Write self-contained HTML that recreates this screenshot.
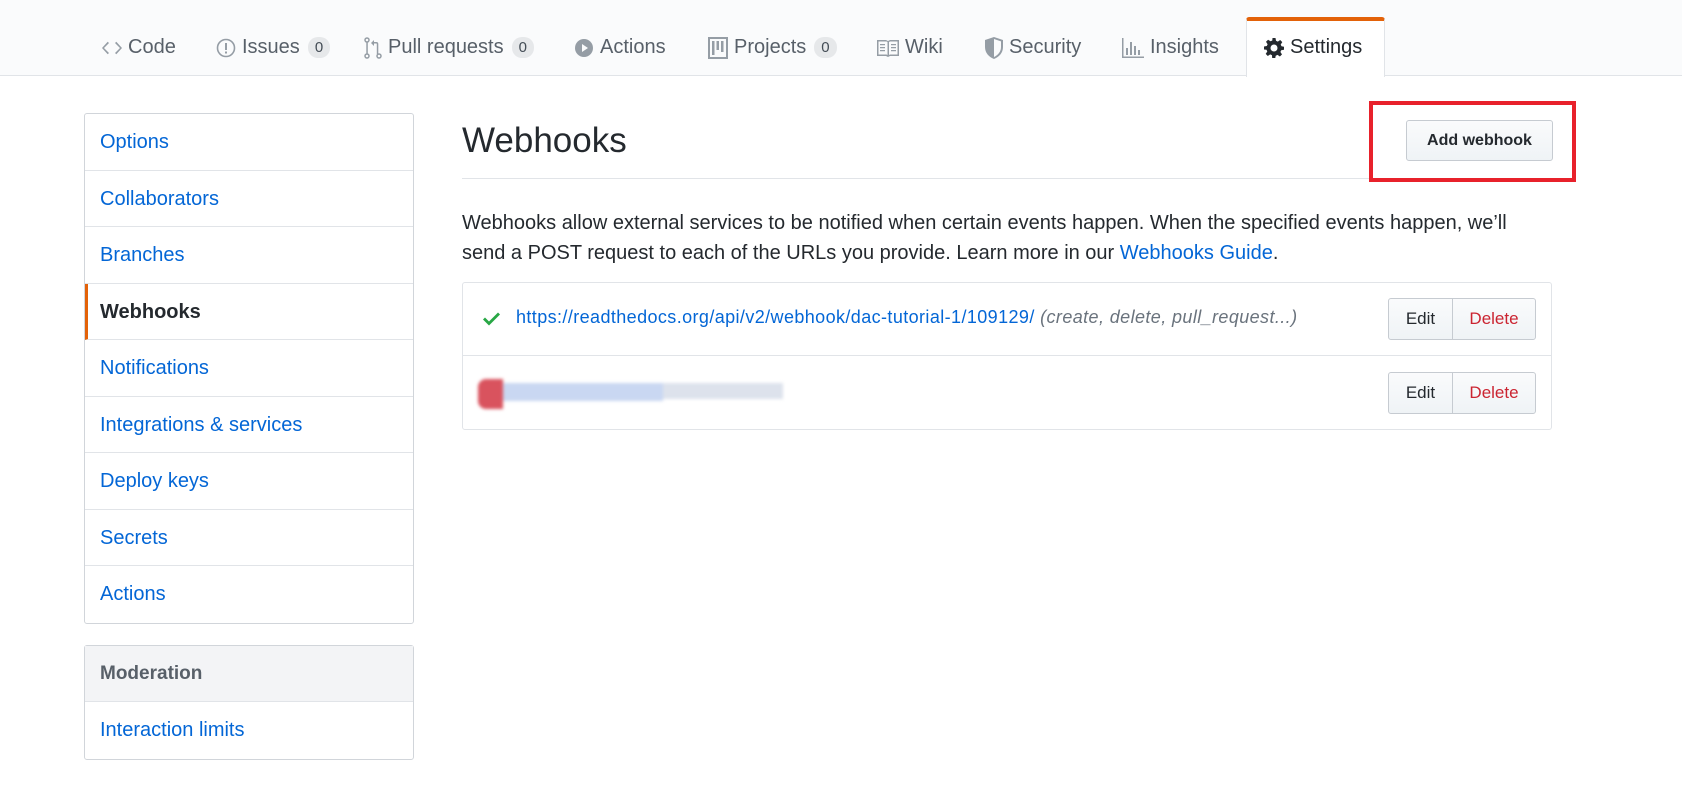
<!DOCTYPE html>
<html><head><meta charset="utf-8"><style>
*{box-sizing:border-box;margin:0;padding:0}
body{width:1682px;height:786px;background:#fff;font-family:"Liberation Sans",sans-serif;color:#24292e;position:relative;overflow:hidden}
.nav{position:absolute;left:0;top:0;width:1682px;height:76px;background:#fafbfc;border-bottom:1px solid #e1e4e8}
.tab{position:absolute;top:36px;font-size:20px;color:#586069;display:flex;align-items:center;gap:6px;white-space:nowrap}
.tab svg{fill:#959da5}
.cnt{display:inline-block;background:#e6e8ea;border-radius:10px;font-size:15px;padding:2px 7px;color:#444d56;margin-left:2px}
.set{position:absolute;left:1246px;top:17px;width:139px;height:60px;background:#fff;border:1px solid #e1e4e8;border-top:4px solid #e36209;border-bottom:none;border-radius:3px 3px 0 0}
.side{position:absolute;left:84px;width:330px;border:1px solid #d1d5da;border-radius:3px;background:#fff}
.side div{height:56.5px;border-bottom:1px solid #e1e4e8;padding-left:15px;line-height:56px;font-size:20px;color:#0366d6}
.side div:last-child{border-bottom:none}
.sel{color:#24292e!important;font-weight:bold;border-left:3px solid #e36209;padding-left:12px!important}
h2{position:absolute;left:462px;top:121px;font-size:35px;font-weight:normal;color:#24292e}
.hr{position:absolute;left:462px;top:178px;width:1090px;height:1px;background:#e1e4e8}
.btn{position:absolute;background:linear-gradient(#fafbfc,#eff3f6);border:1px solid #c6cbd1;border-radius:3px;font-size:16px;font-weight:bold;color:#24292e;text-align:center}
p{position:absolute;left:462px;top:208px;width:1092px;font-size:20px;line-height:30px;color:#24292e}
a{color:#0366d6;text-decoration:none}
.list{position:absolute;left:462px;top:282px;width:1090px;height:148px;border:1px solid #e1e4e8;border-radius:3px}
.row{position:absolute;left:0;width:100%;height:73px}
.grp{position:absolute;left:925px;top:15px;width:148px;height:42px;border:1px solid #c6cbd1;border-radius:3px;background:linear-gradient(#fafbfc,#eff3f6);display:flex;font-size:17px}
.grp span{display:flex;align-items:center;justify-content:center}
</style></head><body>
<div class="nav">
<div class="set"></div>
<div class="tab" style="left:102px"><svg width="20" height="16" viewBox="0 0 20 16"><path d="M7 3 2 8l5 5-1.3 1.2L0 8l5.7-6.2zM13 3l5 5-5 5 1.3 1.2L20 8l-5.7-6.2z"/></svg>Code</div>
<div class="tab" style="left:216px"><svg width="20" height="20" viewBox="0 0 20 20"><circle cx="10" cy="10" r="8.5" fill="none" stroke="#959da5" stroke-width="1.6"/><rect x="9" y="5" width="2" height="7"/><rect x="9" y="13.5" width="2" height="2"/></svg>Issues <span class="cnt">0</span></div>
<div class="tab" style="left:364px"><svg width="18" height="22" viewBox="0 0 18 22"><circle cx="3" cy="3" r="2" fill="none" stroke="#959da5" stroke-width="1.5"/><circle cx="3" cy="19" r="2" fill="none" stroke="#959da5" stroke-width="1.5"/><circle cx="15" cy="19" r="2" fill="none" stroke="#959da5" stroke-width="1.5"/><path d="M2.3 5h1.5v12H2.3zM14.3 17V7a2 2 0 0 0-2-2H10V3L7 6l3 3V6.5h2.3a.5.5 0 0 1 .5.5v10z"/></svg>Pull requests <span class="cnt">0</span></div>
<div class="tab" style="left:574px"><svg width="20" height="20" viewBox="0 0 20 20"><circle cx="10" cy="10" r="9"/><path d="M8 6l6 4-6 4z" fill="#fafbfc"/></svg>Actions</div>
<div class="tab" style="left:708px"><svg width="20" height="22" viewBox="0 0 20 22"><path d="M0 0h20v22H0zM2 2v18h16V2zM4 4h2.5v14H4zM8.5 4H11v9H8.5zM13 4h2.5v11H13z"/></svg>Projects <span class="cnt">0</span></div>
<div class="tab" style="left:877px"><svg width="22" height="18" viewBox="0 0 22 18"><path d="M0 1h9l2 1 2-1h9v16h-9l-2 1-2-1H0zM1.5 2.5v13h8l1 .5v-13l-1-.5zM12 3v13l1-.5h7.5v-13H13zM3 5h5v1.3H3zM3 8h5v1.3H3zM3 11h5v1.3H3zM14 5h5v1.3h-5zM14 8h5v1.3h-5zM14 11h5v1.3h-5z"/></svg>Wiki</div>
<div class="tab" style="left:985px"><svg width="18" height="22" viewBox="0 0 18 22"><path d="M9 0 0 3v7c0 6 4 10 9 12 5-2 9-6 9-12V3zm0 2 7 2.4V10c0 4.8-3 8-7 10z"/></svg>Security</div>
<div class="tab" style="left:1122px"><svg width="22" height="20" viewBox="0 0 22 20"><path d="M0 0h1.5v18.5H22V20H0zM4 10h2v7H4zM8 4h2v13H8zM12 8h2v9h-2zM16 12h2v5h-2z"/></svg>Insights</div>
<div class="tab" style="left:1264px;color:#24292e"><svg width="20" height="20" viewBox="0 0 20 20" style="fill:#24292e"><path d="M8.5 0h3l.5 2.8 1.8.8 2.4-1.6 2.1 2.1-1.6 2.4.8 1.8 2.5.4v3l-2.8.5-.8 1.8 1.6 2.4-2.1 2.1-2.4-1.6-1.8.8-.5 2.8h-3L8 17.2l-1.8-.8-2.4 1.6-2.1-2.1 1.6-2.4-.8-1.8L0 11.5v-3l2.8-.5.8-1.8L2 3.8 4.1 1.7l2.4 1.6L8.3 2.5zM10 6.5a3.5 3.5 0 1 0 0 7 3.5 3.5 0 0 0 0-7z"/></svg>Settings</div>
</div>

<div class="side" style="top:113px">
<div>Options</div><div>Collaborators</div><div>Branches</div><div class="sel">Webhooks</div><div>Notifications</div><div>Integrations &amp; services</div><div>Deploy keys</div><div>Secrets</div><div>Actions</div>
</div>
<div class="side" style="top:645px">
<div style="background:#f3f4f6;color:#586069;font-weight:bold;font-size:19px;height:56px">Moderation</div>
<div>Interaction limits</div>
</div>

<h2>Webhooks</h2>
<div class="hr"></div>
<div style="position:absolute;left:1369px;top:101px;width:207px;height:81px;border:4px solid #e8212b"></div>
<div class="btn" style="left:1406px;top:120px;width:147px;height:41px;line-height:39px">Add webhook</div>

<p>Webhooks allow external services to be notified when certain events happen. When the specified events happen, we’ll send a POST request to each of the URLs you provide. Learn more in our <a>Webhooks Guide</a>.</p>

<div class="list">
<div class="row" style="top:0;border-bottom:1px solid #e1e4e8">
<svg style="position:absolute;left:20px;top:29px" width="17" height="14" viewBox="0 0 17 14"><path d="M0 7.5 2 5.5l4 4L15 0.5l2 2L6 13.5z" fill="#28a745"/></svg>
<div style="position:absolute;left:53px;top:24px;font-size:18px;letter-spacing:0.4px;white-space:nowrap"><a>https://readthedocs.org/api/v2/webhook/dac-tutorial-1/109129/</a> <i style="color:#6a737d">(create, delete, pull_request...)</i></div>
<div class="grp"><span style="width:64px;border-right:1px solid #c6cbd1;color:#24292e">Edit</span><span style="flex:1;color:#cb2431">Delete</span></div>
</div>
<div class="row" style="top:74px">
<div style="position:absolute;left:15px;top:22px;width:306px;height:30px;display:flex;filter:blur(1.5px)">
<div style="width:25px;background:#d9535e;border-radius:8px 0 0 8px"></div>
<div style="width:160px;background:#c9d7f2;margin-top:4px;height:18px"></div>
<div style="width:120px;background:#dde2ec;margin-top:4px;height:16px"></div>
</div>
<div class="grp"><span style="width:64px;border-right:1px solid #c6cbd1;color:#24292e">Edit</span><span style="flex:1;color:#cb2431">Delete</span></div>
</div>
</div>
</body></html>
